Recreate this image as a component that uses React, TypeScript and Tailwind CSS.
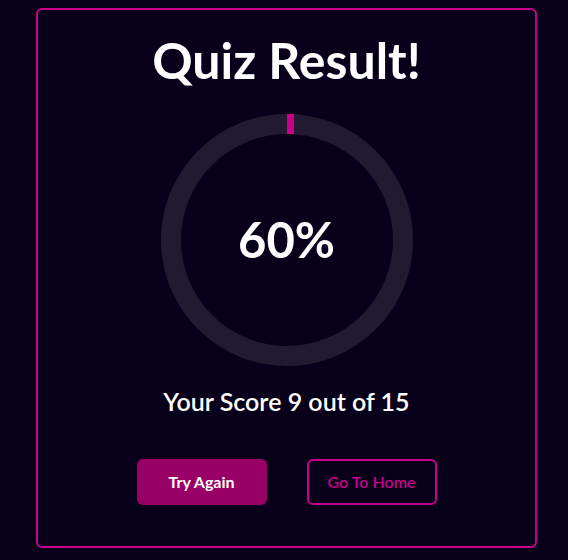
export default function App() {
  const size = 252;
  const stroke = 20;
  const r = (size - stroke) / 2;
  const c = size / 2;

  return (
    <div
      className="min-h-[560px] w-full bg-[#08001a] pt-2"
      style={{ fontFamily: "Lato, 'Noto Sans', sans-serif" }}
    >
      <div className="ml-[36px] flex h-[540px] w-[501px] flex-col items-center rounded-md border-2 border-[#c8008a] pt-[18px]">
        <h1 className="text-[50px] font-bold leading-[64px] text-white">Quiz Result!</h1>

        <div className="relative mt-[22px] h-[252px] w-[252px]">
          <svg width={size} height={size} viewBox={`0 0 ${size} ${size}`}>
            <circle cx={c} cy={c} r={r} stroke="#221a31" strokeWidth={stroke} fill="none" />
            <rect x={c} y={0} width={7} height={stroke} fill="#c8008a" />
          </svg>
          <div className="absolute inset-0 flex items-center justify-center">
            <span className="text-[49px] font-bold text-white">60%</span>
          </div>
        </div>

        <p className="mt-[17px] text-[25px] font-semibold text-white">Your Score 9 out of 15</p>

        <div className="mt-[38px] flex gap-[40px]">
          <button className="h-[46px] w-[130px] rounded-md bg-[#990066] text-[16px] font-bold text-white">
            Try Again
          </button>
          <button className="h-[46px] w-[130px] rounded-md border-2 border-[#c8008a] text-[16px] font-semibold text-[#c8008a]">
            Go To Home
          </button>
        </div>
      </div>
    </div>
  );
}
